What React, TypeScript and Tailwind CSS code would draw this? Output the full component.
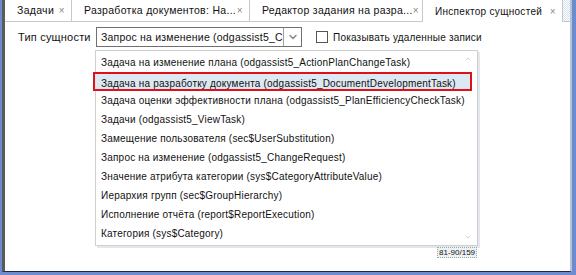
import { ChevronDown, ChevronUp } from 'lucide-react'

const tabs = [
  { label: 'Задачи', w: 'w-[67px]' },
  { label: 'Разработка документов: На...', w: 'w-[178px]' },
  { label: 'Редактор задания на разра...', w: 'w-[173px]' },
]

const items = [
  'Задача на изменение плана (odgassist5_ActionPlanChangeTask)',
  'Задача на разработку документа (odgassist5_DocumentDevelopmentTask)',
  'Задача оценки эффективности плана (odgassist5_PlanEfficiencyCheckTask)',
  'Задачи (odgassist5_ViewTask)',
  'Замещение пользователя (sec$UserSubstitution)',
  'Запрос на изменение (odgassist5_ChangeRequest)',
  'Значение атрибута категории (sys$CategoryAttributeValue)',
  'Иерархия групп (sec$GroupHierarchy)',
  'Исполнение отчёта (report$ReportExecution)',
  'Категория (sys$Category)',
]

export default function App() {
  return (
    <div className="h-[275px] w-[576px] bg-[#6c8ccf] pb-[3px] pl-[2px] pr-[4px] font-['Liberation_Sans',Arial,sans-serif] text-[11px] text-[#111]">
      <div className="relative flex h-full flex-col border-b border-l-[3px] border-r-2 border-b-[#1d2a47] border-l-[#5b5b5b] border-r-[#b9c3d6] bg-white">
        {/* вкладки */}
        <div className="flex h-[22px] shrink-0 text-[10.5px] tracking-[0.3px]">
          {tabs.map((t) => (
            <div
              key={t.label}
              className={`flex ${t.w} shrink-0 items-center justify-between overflow-hidden border-b border-r border-[#c8c8c8] pl-[12px] pr-[6px]`}
            >
              <span className="whitespace-nowrap">{t.label}</span>
              <span className="text-[10px] text-[#888]">×</span>
            </div>
          ))}
          <div className="flex w-[140px] shrink-0 items-center justify-between overflow-hidden border-r border-[#c8c8c8] pl-[12px] pr-[6px]">
            <span className="whitespace-nowrap text-[10px]">Инспектор сущностей</span>
            <span className="text-[10px] text-[#888]">×</span>
          </div>
          <div className="flex-1 border-b border-[#c8c8c8] bg-[repeating-conic-gradient(#d6e2f0_0%_25%,#ffffff_0%_50%)] bg-[length:2px_2px]" />
        </div>

        {/* строка фильтра */}
        <div className="flex items-center pl-[13px] pt-[5px] tracking-[0.2px]">
          <span className="w-[78px] whitespace-nowrap">Тип сущности</span>
          <div className="flex h-[20px] w-[206px] shrink-0 border border-[#707070]">
            <div className="flex-1 overflow-hidden whitespace-nowrap pl-[4px] text-[10.5px] leading-[18px]">
              Запрос на изменение (odgassist5_ChangeRequest)
            </div>
            <div className="flex w-[18px] items-center justify-center border-l border-[#a0a0a0]">
              <ChevronDown className="size-3 text-[#888]" strokeWidth={3} />
            </div>
          </div>
          <div className="ml-[14px] size-[12px] shrink-0 border border-[#555]" />
          <span className="ml-[5px] whitespace-nowrap text-[10px]">Показывать удаленные записи</span>
        </div>

        {/* выпадающий список */}
        <div className="absolute left-[90px] top-[50px] w-[383px] border border-[#cfcfcf] bg-white py-[2px] text-[10px] shadow-[2px_2px_0_#e3e8ee]">
          {items.map((it, i) => (
            <div
              key={it}
              className={`h-[19px] whitespace-nowrap pl-[5px] leading-[19px] tracking-[0.2px] ${
                i === 1 ? '-ml-[3px] mr-[5px] border-[2.5px] border-[#e0101a] bg-[#dde9f2] pl-[6px] leading-[14px]' : ''
              }`}
            >
              {it}
            </div>
          ))}
          <ChevronUp className="absolute right-[5px] top-[4px] size-2 text-[#bbb]" />
          <ChevronDown className="absolute bottom-[4px] right-[5px] size-2 text-[#bbb]" />
        </div>
        <div className="absolute left-[432px] top-[247px] border border-dotted border-[#9aa] bg-[#eef1f4] px-[1px] text-[8px] leading-[9px]">
          81-90/159
        </div>
      </div>
    </div>
  )
}
